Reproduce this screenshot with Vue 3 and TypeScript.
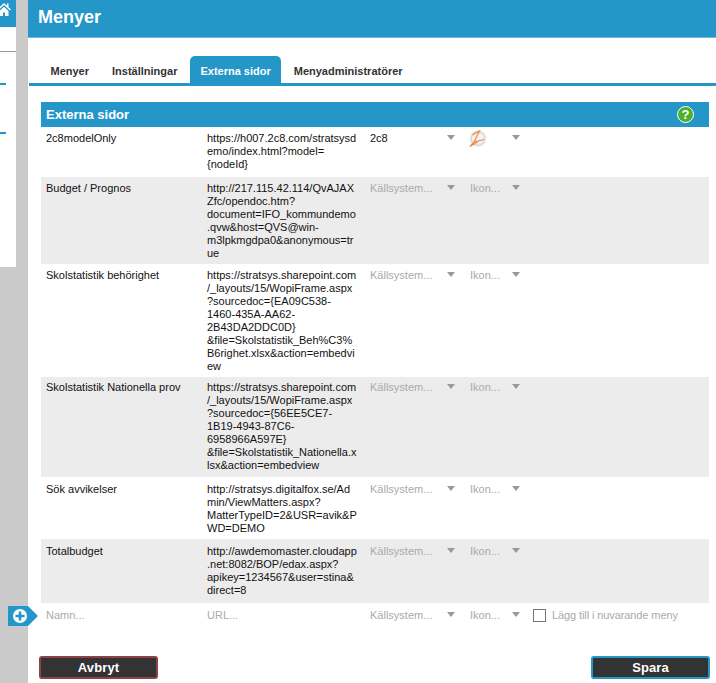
<script setup lang="ts">
interface Row { name: string; url: string[]; source?: string; icon?: boolean; height: number; top: number }
const rows: Row[] = [
  { name: '2c8modelOnly', url: ['https://h007.2c8.com/stratsysd', 'emo/index.html?model=', '{nodeId}'], source: '2c8', icon: true, height: 50, top: 5 },
  { name: 'Budget / Prognos', url: ['http://217.115.42.114/QvAJAX', 'Zfc/opendoc.htm?', 'document=IFO_kommundemo', '.qvw&host=QVS@win-', 'm3lpkmgdpa0&anonymous=tr', 'ue'], height: 87, top: 5 },
  { name: 'Skolstatistik behörighet', url: ['https://stratsys.sharepoint.com', '/_layouts/15/WopiFrame.aspx', '?sourcedoc={EA09C538-', '1460-435A-AA62-', '2B43DA2DDC0D}', '&file=Skolstatistik_Beh%C3%', 'B6righet.xlsx&action=embedvi', 'ew'], height: 113, top: 5 },
  { name: 'Skolstatistik Nationella prov', url: ['https://stratsys.sharepoint.com', '/_layouts/15/WopiFrame.aspx', '?sourcedoc={56EE5CE7-', '1B19-4943-87C6-', '6958966A597E}', '&file=Skolstatistik_Nationella.x', 'lsx&action=embedview'], height: 100, top: 4 },
  { name: 'Sök avvikelser', url: ['http://stratsys.digitalfox.se/Ad', 'min/ViewMatters.aspx?', 'MatterTypeID=2&USR=avik&P', 'WD=DEMO'], height: 62, top: 6 },
  { name: 'Totalbudget', url: ['http://awdemomaster.cloudapp', '.net:8082/BOP/edax.aspx?', 'apikey=1234567&user=stina&', 'direct=8'], height: 64, top: 6 },
]
</script>

<template>
  <div class="page">
    <aside class="side">
      <div class="side-panel">
        <div class="side-top">
          <svg class="home" width="14" height="14" viewBox="0 0 14 14"><path d="M7 1 0 7.500l1 1L7 3l6 5.500 1-1-2.500-2.300V1.500H10v2.300zM2.500 9v5h3.500v-3.500h2V14h3.500V9L7 4.800z" fill="#fff"/></svg>
        </div>
        <div class="side-line gray"></div>
        <div class="side-line blue first"></div>
        <div class="side-line blue second"></div>
      </div>
    </aside>
    <main class="main">
      <header class="head">Menyer</header>
      <nav class="tabs">
        <span class="tab">Menyer</span>
        <span class="tab">Inställningar</span>
        <span class="tab active">Externa sidor</span>
        <span class="tab">Menyadministratörer</span>
      </nav>
      <section class="panel">
        <div class="title">
          <span>Externa sidor</span>
          <span class="help">?</span>
        </div>
        <div v-for="(r, i) in rows" :key="r.name" class="row" :class="{ alt: i % 2 === 1 }" :style="{ height: r.height + 'px', paddingTop: r.top + 'px' }">
          <div class="c-name">{{ r.name }}</div>
          <div class="c-url"><div v-for="l in r.url" :key="l">{{ l }}</div></div>
          <div class="c-src" :class="{ ph: !r.source }">{{ r.source || 'Källsystem...' }}</div>
          <span class="arrow"></span>
          <div class="c-icon" :class="{ ph: !r.icon }">
            <svg v-if="r.icon" width="17" height="17" viewBox="0 0 17 17">
              <circle cx="9" cy="8.500" r="7" fill="#f3f3f3" stroke="#dcdcdc" stroke-width="2"/>
              <path d="M3.500 5 10.500 1 5 12l10-2.500M5 12l-4 4.500L8.500 12" fill="none" stroke="#f08a48" stroke-width="1.200"/>
            </svg>
            <template v-else>Ikon...</template>
          </div>
          <span class="arrow"></span>
        </div>
        <div class="row add">
          <span class="add-tag">
            <svg width="30" height="20" viewBox="0 0 30 20">
              <path d="M0 0h20l10 10-10 10H0z" fill="#2596c8"/>
              <circle cx="12" cy="10" r="7" fill="#fff"/>
              <path d="M12 5.500v9M7.500 10h9" stroke="#2596c8" stroke-width="2.500"/>
            </svg>
          </span>
          <div class="c-name ph">Namn...</div>
          <div class="c-url ph">URL...</div>
          <div class="c-src ph">Källsystem...</div>
          <span class="arrow"></span>
          <div class="c-icon ph">Ikon...</div>
          <span class="arrow"></span>
          <label class="check"><span class="box"></span>Lägg till i nuvarande meny</label>
        </div>
      </section>
      <footer class="actions">
        <button class="btn cancel">Avbryt</button>
        <button class="btn save">Spara</button>
      </footer>
    </main>
  </div>
</template>

<style>
html, body { margin: 0; background: #fff; }
</style>

<style scoped>
.page { display: flex; width: 716px; height: 683px; overflow: hidden; background: #cacaca; font-family: "Liberation Sans", Arial, sans-serif; font-size: 11px; color: #111; }
.side { width: 28px; flex: none; }
.side-panel { width: 16px; height: 267px; background: #fff; position: relative; }
.side-top { height: 27px; background: #2596c8; overflow: hidden; }
.home { margin: 2px 0 0 -3px; display: block; }
.side-line { position: absolute; left: 0; height: 1px; }
.gray { top: 51px; width: 16px; background: #999; }
.blue { width: 6px; height: 2px; background: #2596c8; }
.first { top: 83px; }
.second { top: 132px; }
.main { flex: 1; background: #fff; display: flex; flex-direction: column; min-width: 0; }
.head { height: 37px; background: #2596c8; border-bottom: 1px solid #6fb9dc; color: #fff; font-size: 18px; font-weight: bold; line-height: 35px; padding-left: 10px; box-sizing: content-box; }
.tabs { display: flex; margin: 18px 0 0 1px; border-bottom: 3px solid #2596c8; padding-left: 10px; font-weight: bold; color: #333; box-sizing: content-box; height: 27px; }
.tab { padding: 0 11.5px; line-height: 30px; white-space: nowrap; }
.tab.active { background: #2596c8; color: #fff; border-radius: 5px 5px 0 0; padding: 0 10.5px; margin: 0 1px; }
.panel { margin: 16px 7px 0 13px; }
.title { height: 25px; background: #2596c8; color: #fff; font-size: 13px; font-weight: bold; line-height: 25px; padding: 0 15px 0 5px; display: flex; justify-content: space-between; align-items: center; }
.help { width: 17px; height: 17px; box-sizing: border-box; border: 1px solid #fff; border-radius: 50%; background: #4bb02f; color: #fff; font-size: 13px; line-height: 15px; text-align: center; }
.row { display: flex; align-items: flex-start; padding: 5px 0 0 5px; box-sizing: border-box; line-height: 13px; position: relative; }
.row.alt { background: #ececec; }
.c-name { width: 161px; flex: none; }
.c-url { width: 163px; flex: none; white-space: nowrap; }
.c-src { width: 77px; flex: none; }
.c-icon { width: 42px; flex: none; margin-left: 15px; height: 13px; }
.c-icon svg { display: block; margin-top: -2px; margin-left: -1px; }
.ph { color: #aaa; }
.arrow { flex: none; width: 0; height: 0; margin-top: 3px; border-left: 4px solid transparent; border-right: 4px solid transparent; border-top: 5px solid #999; }
.add { height: 24px; padding-top: 6px; }
.add-tag { position: absolute; left: -33px; top: 3px; height: 20px; }
.check { display: flex; align-items: center; margin-left: 13px; color: #aaa; white-space: nowrap; letter-spacing: -0.1px; }
.box { width: 11px; height: 11px; border: 1px solid #777; margin-right: 6px; background: #fff; }
.actions { display: flex; justify-content: space-between; margin: 29px 6px 0 11px; }
.btn { width: 119px; height: 23px; box-sizing: border-box; background: #333; color: #fff; border-radius: 3px; font: bold 13px "Liberation Sans", Arial, sans-serif; letter-spacing: 0.1px; padding: 0; }
.cancel { border: 2px solid #8e4246; }
.save { border: 2px solid #2596c8; }
</style>
